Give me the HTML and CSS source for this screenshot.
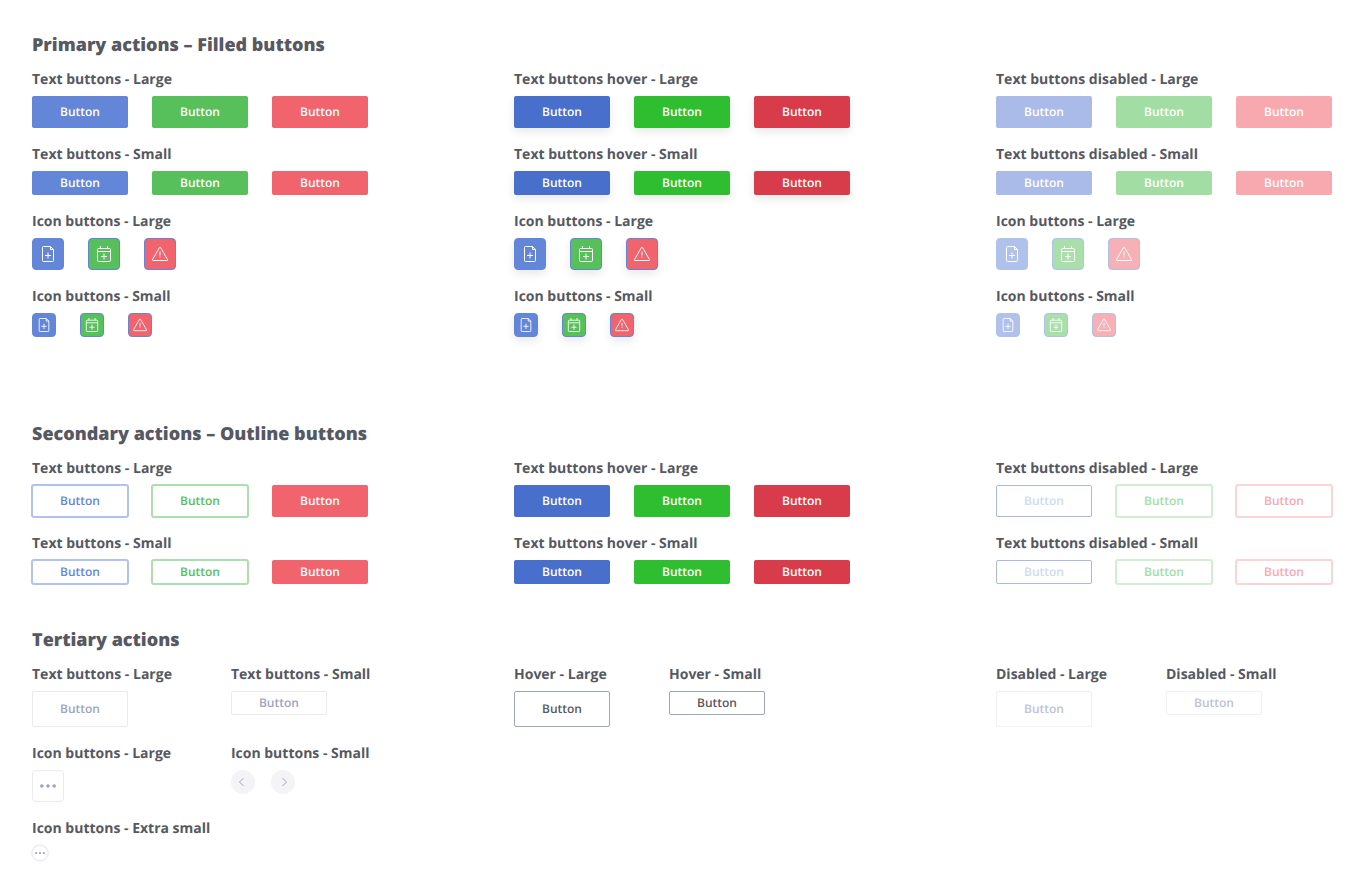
FILE: index.html
```
<!DOCTYPE html>
<html lang="en">
<head>
  <meta charset="UTF-8">
  <meta name="viewport" content="width=device-width, initial-scale=1.0">
  <title>Buttons</title>
  <link rel="stylesheet" href="styles.css">
</head>
<body>
  <!-- shared icons -->
  <svg class="sprite" aria-hidden="true">
    <symbol id="file" viewBox="0 0 16 16">
      <path d="M10.5 .5h-7a1 1 0 0 0-1 1v13a1 1 0 0 0 1 1h9a1 1 0 0 0 1-1v-11zM10.5 .5v3h3M8 6.5v6M5 9.5h6"/>
    </symbol>
    <symbol id="calendar" viewBox="0 0 16 16">
      <path d="M2.5 2.5h11a1 1 0 0 1 1 1v11a1 1 0 0 1-1 1h-11a1 1 0 0 1-1-1v-11a1 1 0 0 1 1-1zM1.5 5.5h13M4.5 0v2.5M11.5 0v2.5M8 7.5v6M5 10.5h6"/>
    </symbol>
    <symbol id="warning" viewBox="0 0 16 16">
      <path d="M7.5 1.4a.6.6 0 0 1 1 0l7 12.2a.6.6 0 0 1-.5.9H1a.6.6 0 0 1-.5-.9zM8 5.5v4M8 10.5v1"/>
    </symbol>
    <symbol id="dots" viewBox="0 0 16 16">
      <circle cx="1.8" cy="8" r="1.8"/><circle cx="8" cy="8" r="1.8"/><circle cx="14.2" cy="8" r="1.8"/>
    </symbol>
  </svg>

  <main>
    <section class="primary">
      <h2>Primary actions – Filled buttons</h2>
      <div class="columns">
        <div class="stack">
          <div>
            <h3>Text buttons - Large</h3>
            <div class="row">
              <button class="btn blue">Button</button>
              <button class="btn green">Button</button>
              <button class="btn red">Button</button>
            </div>
          </div>
          <div>
            <h3>Text buttons - Small</h3>
            <div class="row">
              <button class="btn small blue">Button</button>
              <button class="btn small green">Button</button>
              <button class="btn small red">Button</button>
            </div>
          </div>
          <div>
            <h3>Icon buttons - Large</h3>
            <div class="row">
              <button class="icon-btn blue" aria-label="Add file"><svg><use href="#file"/></svg></button>
              <button class="icon-btn green" aria-label="Add event"><svg><use href="#calendar"/></svg></button>
              <button class="icon-btn red" aria-label="Warning"><svg><use href="#warning"/></svg></button>
            </div>
          </div>
          <div>
            <h3>Icon buttons - Small</h3>
            <div class="row">
              <button class="icon-btn small blue" aria-label="Add file"><svg><use href="#file"/></svg></button>
              <button class="icon-btn small green" aria-label="Add event"><svg><use href="#calendar"/></svg></button>
              <button class="icon-btn small red" aria-label="Warning"><svg><use href="#warning"/></svg></button>
            </div>
          </div>
        </div>

        <div class="stack raised">
          <div>
            <h3>Text buttons hover - Large</h3>
            <div class="row">
              <button class="btn blue hover">Button</button>
              <button class="btn green hover">Button</button>
              <button class="btn red hover">Button</button>
            </div>
          </div>
          <div>
            <h3>Text buttons hover - Small</h3>
            <div class="row">
              <button class="btn small blue hover">Button</button>
              <button class="btn small green hover">Button</button>
              <button class="btn small red hover">Button</button>
            </div>
          </div>
          <div>
            <h3>Icon buttons - Large</h3>
            <div class="row">
              <button class="icon-btn blue" aria-label="Add file"><svg><use href="#file"/></svg></button>
              <button class="icon-btn green" aria-label="Add event"><svg><use href="#calendar"/></svg></button>
              <button class="icon-btn red" aria-label="Warning"><svg><use href="#warning"/></svg></button>
            </div>
          </div>
          <div>
            <h3>Icon buttons - Small</h3>
            <div class="row">
              <button class="icon-btn small blue" aria-label="Add file"><svg><use href="#file"/></svg></button>
              <button class="icon-btn small green" aria-label="Add event"><svg><use href="#calendar"/></svg></button>
              <button class="icon-btn small red" aria-label="Warning"><svg><use href="#warning"/></svg></button>
            </div>
          </div>
        </div>

        <div class="stack">
          <div>
            <h3>Text buttons disabled - Large</h3>
            <div class="row">
              <button class="btn blue" disabled>Button</button>
              <button class="btn green" disabled>Button</button>
              <button class="btn red" disabled>Button</button>
            </div>
          </div>
          <div>
            <h3>Text buttons disabled - Small</h3>
            <div class="row">
              <button class="btn small blue" disabled>Button</button>
              <button class="btn small green" disabled>Button</button>
              <button class="btn small red" disabled>Button</button>
            </div>
          </div>
          <div>
            <h3>Icon buttons - Large</h3>
            <div class="row">
              <button class="icon-btn blue" aria-label="Add file" disabled><svg><use href="#file"/></svg></button>
              <button class="icon-btn green" aria-label="Add event" disabled><svg><use href="#calendar"/></svg></button>
              <button class="icon-btn red" aria-label="Warning" disabled><svg><use href="#warning"/></svg></button>
            </div>
          </div>
          <div>
            <h3>Icon buttons - Small</h3>
            <div class="row">
              <button class="icon-btn small blue" aria-label="Add file" disabled><svg><use href="#file"/></svg></button>
              <button class="icon-btn small green" aria-label="Add event" disabled><svg><use href="#calendar"/></svg></button>
              <button class="icon-btn small red" aria-label="Warning" disabled><svg><use href="#warning"/></svg></button>
            </div>
          </div>
        </div>
      </div>
    </section>

    <section class="secondary">
      <h2>Secondary actions – Outline buttons</h2>
      <div class="columns">
        <div class="stack">
          <div>
            <h3>Text buttons - Large</h3>
            <div class="row">
              <button class="btn outline-blue">Button</button>
              <button class="btn outline-green">Button</button>
              <button class="btn red">Button</button>
            </div>
          </div>
          <div>
            <h3>Text buttons - Small</h3>
            <div class="row">
              <button class="btn small outline-blue">Button</button>
              <button class="btn small outline-green">Button</button>
              <button class="btn small red">Button</button>
            </div>
          </div>
        </div>

        <div class="stack">
          <div>
            <h3>Text buttons hover - Large</h3>
            <div class="row">
              <button class="btn blue hover">Button</button>
              <button class="btn green hover">Button</button>
              <button class="btn red hover">Button</button>
            </div>
          </div>
          <div>
            <h3>Text buttons hover - Small</h3>
            <div class="row">
              <button class="btn small blue hover">Button</button>
              <button class="btn small green hover">Button</button>
              <button class="btn small red hover">Button</button>
            </div>
          </div>
        </div>

        <div class="stack">
          <div>
            <h3>Text buttons disabled - Large</h3>
            <div class="row">
              <button class="btn outline-blue" disabled>Button</button>
              <button class="btn outline-green" disabled>Button</button>
              <button class="btn outline-red" disabled>Button</button>
            </div>
          </div>
          <div>
            <h3>Text buttons disabled - Small</h3>
            <div class="row">
              <button class="btn small outline-blue" disabled>Button</button>
              <button class="btn small outline-green" disabled>Button</button>
              <button class="btn small outline-red" disabled>Button</button>
            </div>
          </div>
        </div>
      </div>
    </section>

    <section class="tertiary">
      <h2>Tertiary actions</h2>
      <div class="columns">
        <div class="pairs">
          <div>
            <h3>Text buttons - Large</h3>
            <button class="btn large plain">Button</button>
          </div>
          <div>
            <h3>Text buttons - Small</h3>
            <button class="btn small plain">Button</button>
          </div>
          <div>
            <h3>Icon buttons - Large</h3>
            <button class="icon-btn more" aria-label="More"><svg><use href="#dots"/></svg></button>
          </div>
          <div>
            <h3>Icon buttons - Small</h3>
            <div class="row arrows">
              <button class="arrow" aria-label="Previous"><svg viewBox="0 0 24 24"><path d="M12.5 8l-4 4 4 4"/></svg></button>
              <button class="arrow" aria-label="Next"><svg viewBox="0 0 24 24"><path d="M11.5 8l4 4-4 4"/></svg></button>
            </div>
          </div>
          <div class="wide">
            <h3>Icon buttons - Extra small</h3>
            <button class="icon-btn more tiny" aria-label="More"><svg><use href="#dots"/></svg></button>
          </div>
        </div>

        <div class="pairs">
          <div>
            <h3>Hover - Large</h3>
            <button class="btn large plain hover">Button</button>
          </div>
          <div>
            <h3>Hover - Small</h3>
            <button class="btn small plain hover">Button</button>
          </div>
        </div>

        <div class="pairs">
          <div>
            <h3>Disabled - Large</h3>
            <button class="btn large plain" disabled>Button</button>
          </div>
          <div>
            <h3>Disabled - Small</h3>
            <button class="btn small plain" disabled>Button</button>
          </div>
        </div>
      </div>
    </section>
  </main>
</body>
</html>
```
FILE: styles.css
```
* {
  box-sizing: border-box;
  margin: 0;
  padding: 0;
}
body {
  font-family: "Open Sans", "Noto Sans", sans-serif;
  color: #565862;
  background: #fff;
  text-rendering: geometricPrecision;
}
.sprite {
  display: none;
}
main {
  padding: 32px;
}
h2 {
  font-size: 18px;
  font-weight: 800;
  line-height: 26px;
  margin-bottom: 11px;
}
h3 {
  font-size: 14px;
  font-weight: 700;
  line-height: 22px;
  margin-bottom: 5px;
  white-space: nowrap;
}
.primary {
  margin-bottom: 84px;
}
.secondary {
  margin-bottom: 43px;
}

/* layout */
.columns {
  display: grid;
  grid-template-columns: repeat(3, 336px);
  justify-content: space-between;
  gap: 32px;
}
.stack {
  display: flex;
  flex-direction: column;
  gap: 16px;
}
.row {
  display: flex;
  gap: 24px;
}
.arrows {
  gap: 16px;
}
.pairs {
  display: grid;
  grid-template-columns: auto auto;
  justify-content: start;
  align-content: start;
  gap: 16px 59px;
}
.wide {
  grid-column: span 2;
}

/* text buttons */
button {
  display: block;
  border: none;
  font-family: inherit;
  text-rendering: inherit;
  cursor: pointer;
}
button:disabled {
  cursor: default;
}
.btn {
  width: 96px;
  height: 32px;
  border-radius: 2px;
  font-size: 12px;
  font-weight: 600;
  line-height: 16px;
  color: #fff;
}
.btn.large {
  height: 36px;
}
.btn.small {
  height: 24px;
}
.blue {
  background: #6386d8;
}
.green {
  background: #57c05a;
}
.red {
  background: #f1636d;
}
.blue.hover {
  background: #486fcc;
}
.green.hover {
  background: #2fbe2f;
}
.red.hover {
  background: #d83c4a;
}
.btn.blue:disabled {
  background: #aabbe9;
}
.btn.green:disabled {
  background: #a2dea3;
}
.btn.red:disabled {
  background: #f8a9af;
}
.raised button {
  box-shadow: 0 4px 8px rgba(34, 42, 53, 0.1);
}

/* outline buttons, the line sits half in and half out of the box */
.outline-blue,
.outline-green,
.outline-red {
  background: #fff;
  border: 1px solid currentColor;
}
.outline-blue {
  color: #6386d8;
  border-color: #b1c2eb;
  box-shadow: 0 0 0 1px #b1c2eb;
}
.outline-green {
  color: #57c05a;
  border-color: #abdfac;
  box-shadow: 0 0 0 1px #abdfac;
}
.outline-blue:disabled {
  color: #d0daf3;
  border-color: #a6b9e8;
  box-shadow: none;
}
.outline-green:disabled {
  color: #a2dea3;
  border-color: #d0eed1;
  box-shadow: 0 0 0 1px #d0eed1;
}
.outline-red:disabled {
  color: #f8a9af;
  border-color: #fbd4d7;
  box-shadow: 0 0 0 1px #fbd4d7;
}

/* tertiary */
.plain {
  background: #fff;
  border: 1px solid #ebebef;
  color: #9da5c1;
}
.plain.hover {
  border-color: #9da5c1;
  color: #565862;
}
.plain:disabled {
  border-color: #f1f1f4;
  color: #bec3d6;
}

/* icon buttons */
.icon-btn {
  display: flex;
  align-items: center;
  justify-content: center;
  width: 32px;
  height: 32px;
  border: 1px solid #6386d8;
  border-radius: 4px;
}
.icon-btn svg {
  width: 16px;
  height: 16px;
  fill: none;
  stroke: #fff;
}
.icon-btn.small {
  width: 24px;
  height: 24px;
}
.icon-btn.small svg {
  width: 14px;
  height: 14px;
}
.icon-btn:disabled {
  opacity: 0.5;
}
.icon-btn.more {
  background: #fff;
  border-color: #ebebef;
}
.icon-btn.more svg {
  fill: #9da5c1;
  stroke: none;
}
.icon-btn.tiny {
  width: 16px;
  height: 16px;
  border-radius: 50%;
  border-color: #f1f1f4;
  box-shadow: 0 0 0 1px #f1f1f4;
}
.icon-btn.tiny svg {
  width: 10px;
  height: 10px;
}
.arrow {
  width: 24px;
  height: 24px;
  border-radius: 50%;
  background: #f4f4f7;
}
.arrow svg {
  display: block;
  fill: none;
  stroke: #9da5c1;
}
```
